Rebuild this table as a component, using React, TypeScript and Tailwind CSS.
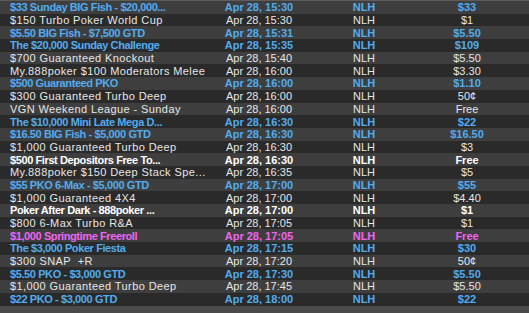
import React from "react";

type Kind = "blue" | "normal" | "white" | "pink";
const rows: [Kind, string, string, string][] = [
  ["blue", "$33 Sunday BIG Fish - $20,000...", "15:30", "$33"],
  ["normal", "$150 Turbo Poker World Cup", "15:30", "$1"],
  ["blue", "$5.50 BIG Fish - $7,500 GTD", "15:31", "$5.50"],
  ["blue", "The $20,000 Sunday Challenge", "15:35", "$109"],
  ["normal", "$700 Guaranteed Knockout", "15:40", "$5.50"],
  ["normal", "My.888poker $100 Moderators Melee", "16:00", "$3.30"],
  ["blue", "$500 Guaranteed PKO", "16:00", "$1.10"],
  ["normal", "$300 Guaranteed Turbo Deep", "16:00", "50¢"],
  ["normal", "VGN Weekend League - Sunday", "16:00", "Free"],
  ["blue", "The $10,000 Mini Late Mega D...", "16:30", "$22"],
  ["blue", "$16.50 BIG Fish - $5,000 GTD", "16:30", "$16.50"],
  ["normal", "$1,000 Guaranteed Turbo Deep", "16:30", "$3"],
  ["white", "$500 First Depositors Free To...", "16:30", "Free"],
  ["normal", "My.888poker $150 Deep Stack Spe...", "16:35", "$5"],
  ["blue", "$55 PKO 6-Max - $5,000 GTD", "17:00", "$55"],
  ["normal", "$1,000 Guaranteed 4X4", "17:00", "$4.40"],
  ["white", "Poker After Dark - 888poker ...", "17:00", "$1"],
  ["normal", "$800 6-Max Turbo R&A", "17:05", "$1"],
  ["pink", "$1,000 Springtime Freeroll", "17:05", "Free"],
  ["blue", "The $3,000 Poker Fiesta", "17:15", "$30"],
  ["normal", "$300 SNAP  +R", "17:20", "50¢"],
  ["blue", "$5.50 PKO - $3,000 GTD", "17:30", "$5.50"],
  ["normal", "$1,000 Guaranteed Turbo Deep", "17:45", "$5.50"],
  ["blue", "$22 PKO - $3,000 GTD", "18:00", "$22"],
];

const kindClass: Record<Kind, string> = {
  blue: "text-[#52acee] font-bold",
  normal: "text-[#e6e6e6] font-normal",
  white: "text-[#ffffff] font-bold",
  pink: "text-[#ee66ee] font-bold",
};

export default function App() {
  return (
    <div
      className="w-[529px] h-[313px] bg-[#4a4a4a] overflow-hidden flex flex-col"
      style={{ fontFamily: "Tahoma, 'Liberation Sans', Arial, sans-serif" }}
    >
      <div className="h-[1px] bg-[#5c5c5c] shrink-0" />
      {rows.map(([kind, name, time, price], i) => (
        <div
          key={i}
          className={`flex items-center h-[12.7px] shrink-0 text-[11px] leading-[12px] whitespace-pre ${
            i % 2 === 0 ? "bg-[#3e3e3e]" : "bg-[#2a2a2a]"
          } ${kindClass[kind]}`}
        >
          <div
            className={`w-[210px] pl-[10px] overflow-hidden ${
              kind === "normal" ? "tracking-[0.4px]" : "tracking-[-0.4px]"
            }`}
          >
            {name}
          </div>
          <div className="w-[98px] text-center">{`Apr 28, ${time}`}</div>
          <div className="w-[112px] text-center">NLH</div>
          <div className="w-[94px] text-center">{price}</div>
        </div>
      ))}
    </div>
  );
}
